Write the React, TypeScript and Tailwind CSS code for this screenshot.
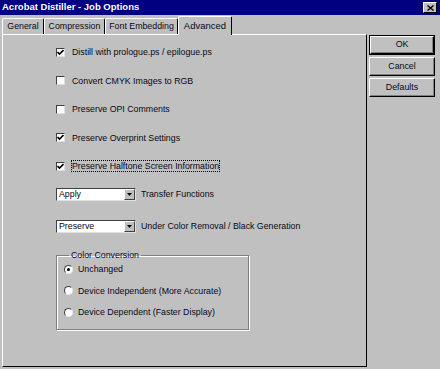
import React from 'react';

const FONT = "font-['Liberation_Sans',Arial,sans-serif]";

const Check = ({ checked }: { checked: boolean }) => (
    <span className="w-[9px] h-[9px] bg-white border-t border-l border-[#404040] border-r border-b border-r-[#e0e0e0] border-b-[#e0e0e0] flex items-center justify-center shrink-0">
        {checked && (
            <svg width="7" height="7" viewBox="0 0 7 7">
                <path d="M0.5 3 L2.5 5 L6.5 1" stroke="#000" strokeWidth="1.6" fill="none" />
            </svg>
        )}
    </span>
);

const CheckRow = ({ label, checked, focused }: { label: string; checked: boolean; focused?: boolean }) => (
    <div className="flex items-center h-[10px] gap-[6px]">
        <Check checked={checked} />
        <span className={focused ? 'border border-dotted border-black leading-[10px]' : 'leading-[10px] px-[1px]'}>{label}</span>
    </div>
);

const Select = ({ value, label }: { value: string; label: string }) => (
    <div className="flex items-center gap-[5px]">
        <div className="w-[80px] h-[13px] bg-white border-t border-l border-[#404040] border-r-[#e0e0e0] border-b-[#e0e0e0] border-r border-b flex items-center">
            <span className="flex-1 pl-[2px] leading-[11px]">{value}</span>
            <span className="w-[11px] h-[11px] bg-[#c0c0c0] border-t border-l border-white border-r border-b border-r-[#404040] border-b-[#404040] flex items-center justify-center">
                <svg width="5" height="3" viewBox="0 0 5 3">
                    <path d="M0 0 H5 L2.5 3 Z" fill="#000" />
                </svg>
            </span>
        </div>
        <span>{label}</span>
    </div>
);

const Radio = ({ label, checked }: { label: string; checked: boolean }) => (
    <div className="flex items-center gap-[5px] h-[10px]">
        <span className="w-[9px] h-[9px] rounded-full bg-white border border-t-[#404040] border-l-[#404040] border-r-[#e8e8e8] border-b-[#e8e8e8] flex items-center justify-center shrink-0">
            {checked && <span className="w-[3px] h-[3px] rounded-full bg-black" />}
        </span>
        <span className="leading-[10px]">{label}</span>
    </div>
);

const Btn = ({ label, isDefault }: { label: string; isDefault?: boolean }) => (
    <div className={isDefault ? 'border border-black' : ''}>
        <div
            className={`${isDefault ? 'h-[18px]' : 'h-[19px]'} w-full flex items-center justify-center border-t border-l border-white border-r border-b border-r-black border-b-black shadow-[inset_-1px_-1px_0_#808080]`}
        >
            {label}
        </div>
    </div>
);

const tabs = ['General', 'Compression', 'Font Embedding'];
const tabWidths = ['w-[42px]', 'w-[61px]', 'w-[73px]'];

export default function App() {
    return (
        <div className={`${FONT} w-[440px] h-[369px] bg-[#c0c0c0] text-[8.8px] text-[#080818] flex flex-col overflow-hidden`}>
            <div className="h-[15px] bg-[#000080] flex items-center justify-between pl-[2px] pr-[3px]">
                <span className="text-white font-bold text-[9.5px]">Acrobat Distiller - Job Options</span>
                <span className="w-[14px] h-[11px] bg-[#c0c0c0] border-t border-l border-white border-r border-b border-r-black border-b-black flex items-center justify-center">
                    <svg width="7" height="6" viewBox="0 0 7 6">
                        <path d="M0.5 0.5 L6.5 5.5 M6.5 0.5 L0.5 5.5" stroke="#000" strokeWidth="1.4" />
                    </svg>
                </span>
            </div>

            <div className="flex flex-1 pl-[2px] gap-[2px]">
                <div className="w-[365px] flex flex-col">
                    <div className="h-[19px] flex items-end">
                        {tabs.map((t, i) => (
                            <div
                                key={t}
                                className={`${tabWidths[i]} h-[16px] flex items-center justify-center border-t border-l border-white border-r border-r-black rounded-t-[2px]`}
                            >
                                {t}
                            </div>
                        ))}
                        <div className="w-[54px] h-[19px] -mb-[1px] bg-[#c0c0c0] flex items-center justify-center border-t border-l border-white border-r border-r-black rounded-t-[2px] relative text-[9.5px]">
                            Advanced
                        </div>
                    </div>
                    <div className="h-[333px] border-t border-l border-white border-r border-b border-r-black border-b-black pl-[53px] pt-[12px] flex flex-col">
                        <div className="flex flex-col gap-[18.5px]">
                            <CheckRow label="Distill with prologue.ps / epilogue.ps" checked />
                            <CheckRow label="Convert CMYK Images to RGB" checked={false} />
                            <CheckRow label="Preserve OPI Comments" checked={false} />
                            <CheckRow label="Preserve Overprint Settings" checked />
                            <CheckRow label="Preserve Halftone Screen Information" checked focused />
                        </div>
                        <div className="mt-[17px] flex flex-col gap-[19px]">
                            <Select value="Apply" label="Transfer Functions" />
                            <Select value="Preserve" label="Under Color Removal / Black Generation" />
                        </div>
                        <fieldset className="mt-[17px] w-[193px] h-[80px] border border-[#808080] shadow-[inset_1px_1px_0_#fff,1px_1px_0_#fff] px-[7px] pt-[4px] flex flex-col gap-[11.5px]">
                            <legend className="ml-[5px] px-[2px] leading-[10px]">Color Conversion</legend>
                            <Radio label="Unchanged" checked />
                            <Radio label="Device Independent (More Accurate)" checked={false} />
                            <Radio label="Device Dependent (Faster Display)" checked={false} />
                        </fieldset>
                    </div>
                </div>

                <div className="w-[66px] pt-[20px] flex flex-col gap-[2px]">
                    <Btn label="OK" isDefault />
                    <Btn label="Cancel" />
                    <Btn label="Defaults" />
                </div>
            </div>
        </div>
    );
}
